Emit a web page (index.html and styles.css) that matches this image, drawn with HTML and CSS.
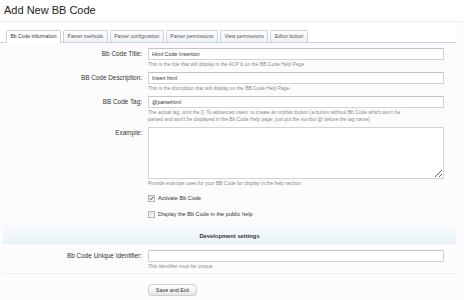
FILE: index.html
```html
<!DOCTYPE html>
<html lang="en">
<head>
    <meta charset="UTF-8">
    <title>Add New BB Code</title>
    <link rel="stylesheet" href="styles.css">
</head>
<body>
    <h1 class="title">Add New BB Code</h1>
    <div class="tabs">
        <span class="tab active">Bb Code information</span>
        <span class="tab">Parser methods</span>
        <span class="tab">Parser configuration</span>
        <span class="tab">Parser permissions</span>
        <span class="tab">View permissions</span>
        <span class="tab">Editor button</span>
    </div>
    <div class="panel">
        <div class="row">
            <label class="label">Bb Code Title:</label>
            <div class="field">
                <input class="input" type="text" value="Html Code Insertion">
                <p class="hint">This is the title that will display in the ACP &amp; on the BB Code Help Page.</p>
            </div>
        </div>
        <div class="row">
            <label class="label">BB Code Description:</label>
            <div class="field">
                <input class="input" type="text" value="Insert html">
                <p class="hint">This is the discription that will display on the BB Code Help Page.</p>
            </div>
        </div>
        <div class="row">
            <label class="label">BB Code Tag:</label>
            <div class="field">
                <input class="input" type="text" value="@parsehtml">
                <p class="hint">The actual tag, omit the []. To advanced users: to create an orphan button (a button without Bb Code which won't be parsed and won't be displayed in the Bb Code Help page, just put the symbol @ before the tag name)</p>
            </div>
        </div>
        <div class="row">
            <label class="label">Example:</label>
            <div class="field">
                <textarea class="textarea"></textarea>
                <p class="hint">Provide example uses for your BB Code for display in the help section.</p>
            </div>
        </div>
        <div class="row check-row">
            <span class="label"></span>
            <label class="check">
                <span class="box"><svg width="5" height="5" viewBox="0 0 5 5"><path d="M0.6 2.4 L2 3.8 L4.4 0.8" fill="none" stroke="#555" stroke-width="0.9"/></svg></span>
                Activate Bb Code
            </label>
        </div>
        <div class="row check-row">
            <span class="label"></span>
            <label class="check"><span class="box"></span> Display the Bb Code in the public help</label>
        </div>
        <h3 class="section">Development settings</h3>
        <div class="row last">
            <label class="label">Bb Code Unique Identifier:</label>
            <div class="field">
                <input class="input" type="text">
                <p class="hint">This identifier must be unique.</p>
            </div>
        </div>
        <div class="actions">
            <button class="button">Save and Exit</button>
        </div>
    </div>
</body>
</html>
```

FILE: styles.css
```css
body { margin: 0; background: #fcfcfe; font-family: "Liberation Sans", Arial, sans-serif; color: #222; }
.title { margin: 0; padding: 4px 4px 0; height: 17px; font-size: 11px; font-weight: normal; color: #222; background: #fff; border-bottom: 1px solid #eef0f3; }
.tabs { display: flex; gap: 2px; padding: 8px 0 0 6px; height: 12px; background: #fff; border-bottom: 1px solid #c9d3de; margin-right: 8px; }
.tab { display: block; height: 11px; line-height: 11px; padding: 0 3.5px; font-size: 5.05px; color: #555; border: 1px solid #c9d3de; border-bottom: none; background: linear-gradient(#fff, #edf2f7); border-radius: 2px 2px 0 0; }
.tab.active { background: #fff; height: 12px; color: #333; margin-bottom: -1px; }
.panel { padding-top: 5px; margin-right: 8px; }
.row { display: flex; margin-bottom: 4px; }
.label { width: 142px; flex: none; text-align: right; font-size: 6.4px; line-height: 12px; color: #333; padding-right: 6px; }
.field { width: 296px; }
.input { display: block; box-sizing: border-box; width: 296px; height: 12px; margin: 0; padding: 0 3px; border: 1px solid #d3d3d3; border-top-color: #c4c4c4; font-family: inherit; font-size: 5.4px; color: #333; background: #fff; }
.textarea { display: block; box-sizing: border-box; width: 296px; height: 52px; margin: 0; border: 1px solid #d3d3d3; background: #fff; resize: vertical; }
.hint { max-width: 266px; margin: 1px 0 0; font-size: 4.95px; line-height: 7px; color: #8a8a8a; }
.check-row { margin: 7px 0 2px; }
.check { display: flex; align-items: center; font-size: 5.6px; line-height: 9px; color: #333; }
.box { display: flex; align-items: center; justify-content: center; box-sizing: border-box; width: 7px; height: 7px; margin-right: 3px; border: 1px solid #b5b5b5; background: linear-gradient(#e2e2e2, #fafafa); }
.section { margin: 2px 0 6px 3px; box-sizing: border-box; height: 23px; padding-top: 11px; line-height: 8px; text-align: center; font-size: 5.8px; font-weight: bold; color: #333; background: linear-gradient(#fcfcfe, #eaf4f8); border-bottom: 1px solid #e7eef3; }
.row.last { padding-bottom: 3px; margin-left: 3px; border-bottom: 1px solid #eceef2; margin-bottom: 4px; }
.row.last .label { width: 139px; }
.actions { padding-left: 148px; }
.button { width: 49px; height: 12px; padding: 0; font-family: inherit; font-size: 5.4px; color: #333; border: 1px solid #cfcfcf; border-radius: 4px; background: linear-gradient(#fff, #e6e6e6); box-shadow: 0 1px 1px #ddd; }
```
